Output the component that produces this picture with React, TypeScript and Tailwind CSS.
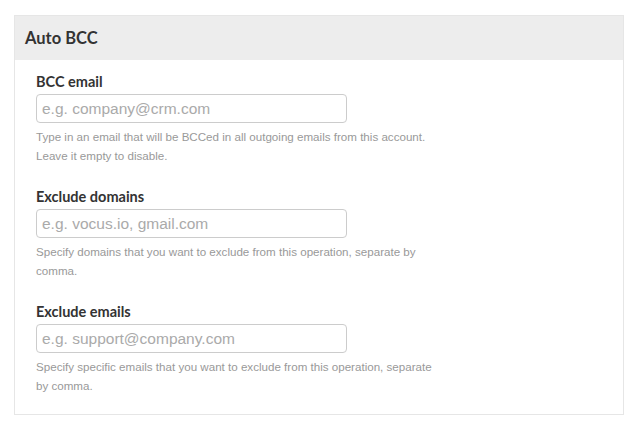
import React from 'react';

interface FieldProps {
  label: string;
  placeholder: string;
  help: string;
}

const Field: React.FC<FieldProps> = ({ label, placeholder, help }) => {
  return (
    <div className="flex flex-col">
      <label className="h-5 text-[14.5px] leading-5 font-bold text-[#333333] font-['Lato',sans-serif]">
        {label}
      </label>
      <input
        type="text"
        placeholder={placeholder}
        className="mt-[2px] w-[311px] h-[29px] px-[5px] rounded-[4px] border border-[#cccccc] bg-white text-[15.5px] text-[#333333] placeholder:text-[#aaaaaa] font-['Liberation_Sans',Arial,sans-serif] outline-none"
      />
      <p className="mt-[4px] max-w-[405px] text-[11.6px] leading-[19px] text-[#999999] font-['Liberation_Sans',Arial,sans-serif]">
        {help}
      </p>
    </div>
  );
};

const App: React.FC = () => {
  return (
    <div className="w-[642px] h-[432px] bg-white pt-[15px] pl-[14px]">
      <div className="w-[610px] h-[400px] border border-[#e6e6e6] flex flex-col">
        {/* Header */}
        <div className="h-[44px] bg-[#ededed] flex items-center pl-[10px]">
          <h2 className="text-[16.5px] font-bold text-[#333333] font-['Lato',sans-serif]">Auto BCC</h2>
        </div>

        {/* Fields */}
        <div className="flex flex-col gap-[22px] pt-[12px] pl-[21px]">
          <Field
            label="BCC email"
            placeholder="e.g. company@crm.com"
            help="Type in an email that will be BCCed in all outgoing emails from this account. Leave it empty to disable."
          />
          <Field
            label="Exclude domains"
            placeholder="e.g. vocus.io, gmail.com"
            help="Specify domains that you want to exclude from this operation, separate by comma."
          />
          <Field
            label="Exclude emails"
            placeholder="e.g. support@company.com"
            help="Specify specific emails that you want to exclude from this operation, separate by comma."
          />
        </div>
      </div>
    </div>
  );
};

export default App;
